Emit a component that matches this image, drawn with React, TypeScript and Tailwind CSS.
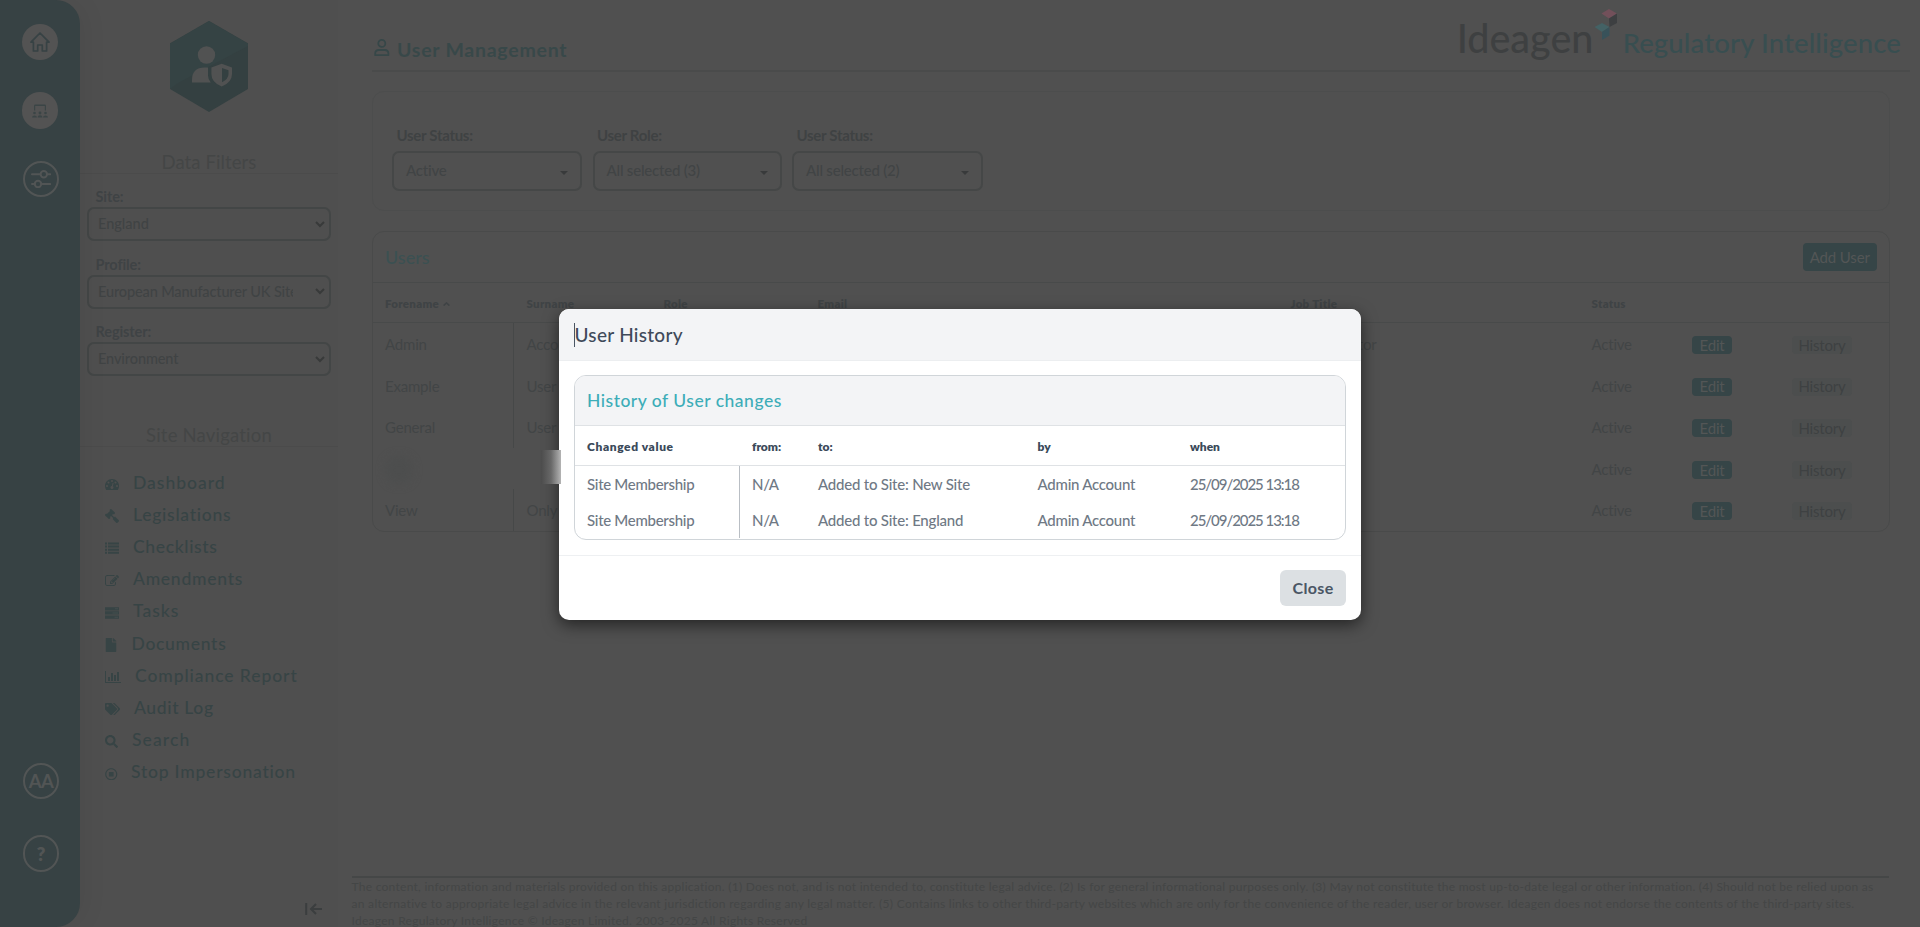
import React from "react";
import { FaFile, FaGavel, FaRegStopCircle, FaSearch, FaTags } from "react-icons/fa";

function Fa4({ d, box = "0 0 1792 1792", className = "w-[14px] h-[14px]" }: { d: string; box?: string; className?: string }) {
  return (
    <svg viewBox={box} className={className} fill="currentColor">
      <path d={d} />
    </svg>
  );
}

const TACHO =
  "M384 1152q0-53-37.5-90.5t-90.5-37.5-90.5 37.5-37.5 90.5 37.5 90.5 90.5 37.5 90.5-37.5 37.5-90.5zm192-448q0-53-37.5-90.5t-90.5-37.5-90.5 37.5-37.5 90.5 37.5 90.5 90.5 37.5 90.5-37.5 37.5-90.5zm428 481l101-382q6-26-7.5-48.5t-38.5-29.5-48 6.5-30 39.5l-101 382q-60 5-107 43.5t-63 98.5q-20 77 20 146t117 89 146-20 89-117q16-60-6-117t-72-91zm660-33q0-53-37.5-90.5t-90.5-37.5-90.5 37.5-37.5 90.5 37.5 90.5 90.5 37.5 90.5-37.5 37.5-90.5zm-640-640q0-53-37.5-90.5t-90.5-37.5-90.5 37.5-37.5 90.5 37.5 90.5 90.5 37.5 90.5-37.5 37.5-90.5zm448 192q0-53-37.5-90.5t-90.5-37.5-90.5 37.5-37.5 90.5 37.5 90.5 90.5 37.5 90.5-37.5 37.5-90.5zm320 448q0 261-141 483-19 29-54 29h-1402q-35 0-54-29-141-221-141-483 0-182 71-348t191-286 286-191 348-71 348 71 286 191 191 286 71 348z";
const PENCIL =
  "M888 1184l116-116-152-152-116 116v56h96v96h56zm440-720q-16-16-33 1l-350 350q-17 17-1 33t33-1l350-350q17-17 1-33zm80 594v190q0 119-84.5 203.5t-203.5 84.5h-832q-119 0-203.5-84.5t-84.5-203.5v-832q0-119 84.5-203.5t203.5-84.5h832q63 0 117 25 15 7 18 23 3 17-9 29l-49 49q-14 14-32 8-23-6-45-6h-832q-66 0-113 47t-47 113v832q0 66 47 113t113 47h832q66 0 113-47t47-113v-126q0-13 9-22l64-64q15-15 35-7t20 29zm-96-738l288 288-672 672h-288v-288zm444 132l-92 92-288-288 92-92q28-28 68-28t68 28l152 152q28 28 28 68t-28 68z";
const CHART =
  "M640 896v512h-256v-512h256zm384-512v1024h-256v-1024h256zm1024 1152v128h-2048v-1536h128v1408h1920zm-640-896v768h-256v-768h256zm384-384v1152h-256v-1152h256z";

const nav: { label: string; icon: React.ReactNode; gap: string; track: string }[] = [
  { label: "Dashboard", gap: "w-[28px]", track: "tracking-[1px]", icon: <Fa4 d={TACHO} /> },
  { label: "Legislations", gap: "w-[28px]", track: "tracking-[0.75px]", icon: <FaGavel className="h-[14px] w-[14px] -scale-x-100" /> },
  {
    label: "Checklists",
    gap: "w-[28px]",
    track: "tracking-[0.65px]",
    icon: (
      <svg viewBox="0 0 14 12" className="h-[12px] w-[14px]" fill="currentColor">
        <path d="M0 .5h2v2H0zM3 .5h11v2H3zM0 3.6h2v2H0zM3 3.6h11v2H3zM0 6.7h2v2H0zM3 6.7h11v2H3zM0 9.8h2v2H0zM3 9.8h11v2H3z" />
      </svg>
    ),
  },
  { label: "Amendments", gap: "w-[28px]", track: "tracking-[0.75px]", icon: <Fa4 d={PENCIL} /> },
  {
    label: "Tasks",
    gap: "w-[28px]",
    track: "tracking-[1px]",
    icon: (
      <svg viewBox="0 0 14 12" className="h-[12px] w-[14px]" fill="currentColor">
        <path d="M0 .2h14v3.3H0zM0 4.3h14v3.3H0zM0 8.5h14v3.3H0z" />
        <path d="M10 1.3h3v1h-3zM7.5 5.5h5.500v1h-5.500zM9.500 9.700h3.500v1h-3.500z" fill="#454e4f" />
      </svg>
    ),
  },
  { label: "Documents", gap: "w-[26.5px]", track: "tracking-[0.7px]", icon: <FaFile className="h-[14px] w-[12px]" /> },
  { label: "Compliance Report", gap: "w-[30px]", track: "tracking-[0.93px]", icon: <Fa4 d={CHART} box="0 0 2048 1792" className="h-[14px] w-[16px]" /> },
  { label: "Audit Log", gap: "w-[29px]", track: "tracking-[0.65px]", icon: <FaTags className="h-[14px] w-[15px]" /> },
  { label: "Search", gap: "w-[27px]", track: "tracking-[1.1px]", icon: <FaSearch className="h-[13px] w-[13px]" /> },
  { label: "Stop Impersonation", gap: "w-[26px]", track: "tracking-[0.79px]", icon: <FaRegStopCircle className="h-[12.5px] w-[12.5px]" /> },
];

function Rail() {
  return (
    <aside className="z-10 flex w-[80px] shrink-0 flex-col rounded-r-[24px] bg-[#374244] pl-[22px] shadow-[6px_0_24px_rgba(0,0,0,0.05)]">
      <div className="mt-[24px] flex h-[36px] w-[36px] items-center justify-center rounded-full bg-[#535353]">
        <svg viewBox="0 0 20 20" className="h-[20px] w-[20px]" fill="none" stroke="#374244" strokeWidth="1.7" strokeLinejoin="round" strokeLinecap="round">
          <path d="M1 10.2L10 1l9 9.200h-2.400v8.800h-4.300v-6h-4.600v6H3.400v-8.800z" />
        </svg>
      </div>
      <div className="mt-[32px] flex h-[37px] w-[36px] items-center justify-center rounded-full bg-[#535353]">
        <svg viewBox="0 0 16 14" className="h-[14px] w-[16px]" fill="#3b4546">
          <path d="M2 6.500V2Q2 .6 3.400.6h9.200Q14 .6 14 2v4.500h-1.200V1.900H3.200V6.500z" />
          <circle cx="2.5" cy="9" r="1.3" />
          <circle cx="8" cy="9" r="1.4" />
          <circle cx="13.5" cy="9" r="1.3" />
          <path d="M0 13.500q0-2 2.500-2t2.500 2zM5.500 13.500q0-2.200 2.500-2.200t2.500 2.200zM11 13.500q0-2 2.500-2t2.500 2z" />
        </svg>
      </div>
      <div className="ml-[1px] mt-[32px] flex h-[36px] w-[36px] items-center justify-center rounded-full border-2 border-[#525555]">
        <svg viewBox="0 0 20 18" className="h-[18px] w-[20px] shrink-0" fill="none" stroke="#525555" strokeWidth="2" strokeLinecap="round">
          <path d="M1 4.200h8M16.500 4.200h2.700M1 14h2.500M11 14h8.200" />
          <circle cx="12.8" cy="4.2" r="3.2" />
          <circle cx="7" cy="14" r="3.2" />
        </svg>
      </div>
      <div className="ml-[1px] mt-[566px] flex h-[36px] w-[36px] items-center justify-center rounded-full border-2 border-[#525555] pt-[1px] text-[18.5px] font-bold tracking-[-0.6px] text-[#525555]">
        AA
      </div>
      <div className="ml-[1px] mt-[36px] flex h-[37px] w-[36px] items-center justify-center rounded-full border-2 border-[#525555] pt-[1px] text-[19px] font-extrabold text-[#525555]">
        ?
      </div>
    </aside>
  );
}

function SideSelect({ label, value, track }: { label: string; value: string; track: string }) {
  return (
    <div className="ml-[7px] h-[67.5px] w-[244px]">
      <div className="pl-[8.5px] text-[14.5px] font-bold leading-[22px] tracking-[-0.1px] text-[#3f4345]">{label}</div>
      <div className="-mt-[1px] flex h-[34px] items-center rounded-[7px] border-2 border-[#434646] pl-[9px] pr-[4px]">
        <div className={`${track} w-[195px] overflow-hidden whitespace-nowrap text-[14.5px] font-medium leading-[20px] text-[#404344]`}>{value}</div>
        <svg viewBox="0 0 10 7" className="ml-auto h-[7px] w-[10px]" fill="none" stroke="#383a3a" strokeWidth="2">
          <path d="M1 1l4 4 4-4" />
        </svg>
      </div>
    </div>
  );
}

function Sidebar() {
  return (
    <div className="flex w-[258px] shrink-0 flex-col bg-[#4f4f4f]">
      <svg viewBox="0 0 78 91" className="ml-[90px] mt-[21px] h-[91px] w-[78px]">
        <path d="M39 0L78 22.500V68L39 91L0 68V22.500z" fill="#344041" />
        <path d="M39 0L78 22.500V25L8 62L0 68V22.500z" fill="#354344" />
        <g fill="#515252">
          <circle cx="36.5" cy="34" r="8.7" />
          <path d="M22 61.500v-2.500q0-12.500 12.500-12.500h3.500v8q0 4 2.800 7z" />
          <path fillRule="evenodd" d="M51.700 42.800l10.300 3.700v6.500q0 8.500-10.300 12.500q-10.300-4-10.300-12.500v-6.500zM52 47v14.300q6.500-3.300 6.500-8.300v-3.700z" />
        </g>
      </svg>
      <div className="mt-[37px] h-[25px] border-b border-[#4b4b4b] text-center text-[18.5px] leading-[26px] tracking-[0.1px] text-[#444646]">Data Filters</div>
      <div className="mt-[12px]">
        <SideSelect label="Site:" value="England" track="tracking-[0px]" />
        <SideSelect label="Profile:" value="European Manufacturer UK Site" track="tracking-[-0.13px]" />
        <SideSelect label="Register:" value="Environment" track="tracking-[-0.1px]" />
      </div>
      <div className="mt-[33.5px] h-[25px] border-b border-[#4b4b4b] text-center text-[18.5px] leading-[26px] tracking-[0.2px] text-[#444646]">Site Navigation</div>
      <nav className="mt-[19.5px] pl-[25px]">
        {nav.map((n) => (
          <div key={n.label} className="flex h-[32.2px] items-center text-[#374445]">
            <div className={`${n.gap} flex shrink-0 items-center pt-[3px]`}>{n.icon}</div>
            <div className={`${n.track} whitespace-nowrap text-[17.5px] font-medium leading-[32px]`}>{n.label}</div>
          </div>
        ))}
      </nav>
      <svg viewBox="0 0 18 12" className="ml-[225px] mt-[115px] h-[12px] w-[18px]" fill="none" stroke="#3b3e3f" strokeWidth="2">
        <path d="M1.200 0v12M17 6H6M11 1L6 6l5 5" />
      </svg>
    </div>
  );
}

function FilterSelect({ label, value, w }: { label: string; value: string; w: string }) {
  return (
    <div className={w}>
      <div className="pl-[4.5px] text-[15px] font-bold leading-[20px] tracking-[-0.3px] text-[#3f4243]">{label}</div>
      <div className="mt-[6px] flex h-[40px] items-center rounded-[7px] border-2 border-[#454747] pl-[12px] pr-[12px] text-[15px] font-medium text-[#414445]">
        <span className="-mt-[1px] tracking-[-0.2px]">{value}</span>
        <svg viewBox="0 0 8 4" className="ml-auto mt-[4px] h-[4px] w-[8px]" fill="#383a3b">
          <path d="M0 0h8L4 4z" />
        </svg>
      </div>
    </div>
  );
}

const users = [
  ["Admin", "Account", "Administrator"],
  ["Example", "User", ""],
  ["General", "User", ""],
  ["", "", ""],
  ["View", "Only", ""],
];

const userCols = "grid grid-cols-[141px_137px_154px_473px_301px_100px_100px_1fr]";

function UsersCard() {
  return (
    <section className="mt-[20px] h-[301px] w-[1518px] rounded-[12px] border border-[#494a4a]">
      <div className="flex h-[51px] items-center justify-between border-b border-[#484a4a] pl-[12px] pr-[12px]">
        <span className="text-[18px] font-medium tracking-[0px] text-[#3b5052]">Users</span>
        <span className="flex h-[28px] w-[74.5px] items-center justify-center rounded-[4px] bg-[#364547] text-[15px] tracking-[-0.15px] text-[#535656]">Add User</span>
      </div>
      <div className={`${userCols} h-[40px] items-center border-b border-[#484a4a] pt-[2px] text-[11.5px] font-extrabold tracking-[0.3px] text-[#3f4345]`}>
        <span className="flex items-center gap-[4px] pl-[12px]">
          Forename
          <svg viewBox="0 0 7 4" className="h-[4px] w-[7px]" fill="none" stroke="currentColor" strokeWidth="1.6">
            <path d="M.6 3.600L3.500 1l2.900 2.600" />
          </svg>
        </span>
        <span className="pl-[12.5px]">Surname</span>
        <span className="pl-[12.5px]">Role</span>
        <span className="pl-[12.5px]">Email</span>
        <span className="pl-[12.5px]">Job Title</span>
        <span className="pl-[12.5px]">Status</span>
      </div>
      {users.map((u, i) => (
        <div key={i} className={`${userCols} h-[41.6px] text-[15px] tracking-[-0.2px] text-[#424546]`}>
          {u[0] ? (
            <span className="border-r border-[#464848] pl-[12px] pt-[11px] leading-[20px]">{u[0]}</span>
          ) : (
            <span className="pl-[12px] pt-[8px]">
              <span className="block h-[28px] w-[28px] rounded-full bg-[#4d4e4e] blur-[4px]" />
            </span>
          )}
          <span className="pl-[12.5px] pt-[11px] leading-[20px]">{u[1]}</span>
          <span />
          <span />
          <span className="pl-[11px] pt-[11px] leading-[20px]">{u[2]}</span>
          <span className="pl-[12.5px] pt-[11px] leading-[20px]">Active</span>
          <span className="pl-[13px] pt-[13px]">
            <span className="flex h-[18px] w-[40px] items-center justify-center rounded-[4px] bg-[#364547] text-[#535656]">Edit</span>
          </span>
          <span className="pl-[13px] pt-[13px]">
            <span className="flex h-[18px] w-[60px] items-center justify-center rounded-[4px] bg-[#4c4e4e] text-[#3e4142]">History</span>
          </span>
        </div>
      ))}
    </section>
  );
}

function Main() {
  return (
    <main className="flex min-w-0 flex-1 flex-col pl-[34px]">
      <header className="mr-[10px] flex h-[72px] shrink-0 border-b-2 border-[#4a4b4b]">
        <svg viewBox="0 0 16 18" className="ml-[2px] mt-[39px] h-[18px] w-[16px]" fill="none" stroke="#364748" strokeWidth="1.8">
          <circle cx="7.8" cy="4.4" r="3.5" />
          <path d="M1.200 16.200v-1.600q0-3.600 3.600-3.600h6q3.600 0 3.600 3.600v1.600z" strokeLinejoin="round" />
        </svg>
        <h1 className="ml-[7px] mt-[36.5px] text-[19.5px] font-bold leading-[26px] tracking-[0.75px] text-[#384849]">User Management</h1>
        <div className="relative ml-auto mr-[9px] flex whitespace-nowrap">
          <span className="mt-[14px] w-[166px] text-[39.5px] font-medium leading-[48px] text-[#3e4041]">Ideagen</span>
          <span className="mt-[24.5px] text-[27.5px] font-medium leading-[36px] tracking-[0.12px] text-[#384e50]">Regulatory Intelligence</span>
          <svg viewBox="0 0 23 31" className="absolute left-[137px] top-[9px] h-[31px] w-[23px]">
            <path d="M15 0l8 4.500-8 5L7.500 4.500z" fill="#72505a" />
            <path d="M15 9.500l8-5v9.500l-7.500 4z" fill="#3d3f41" />
            <path d="M8 14l7.500 4-7.500 5L.5 18z" fill="#446265" />
            <path d="M8 23l7.500-5v8.500l-7.500 4.500z" fill="#38525a" />
          </svg>
        </div>
      </header>
      <section className="mt-[19px] flex h-[120px] w-[1518px] shrink-0 rounded-[12px] border border-[#4c4d4d] pl-[19px] pt-[33px]">
        <FilterSelect label="User Status:" value="Active" w="w-[190px] mr-[10.5px]" />
        <FilterSelect label="User Role:" value="All selected (3)" w="w-[189.5px] mr-[10px]" />
        <FilterSelect label="User Status:" value="All selected (2)" w="w-[191px]" />
      </section>
      <UsersCard />
      <footer className="-ml-[20.5px] mt-auto h-[51px] w-[1537px] shrink-0 whitespace-nowrap border-t-2 border-[#454747] text-[12px] leading-[17.2px] text-[#444646]">
        <p className="tracking-[0.268px]">
          The content, information and materials provided on this application. (1) Does not, and is not intended to, constitute legal advice. (2) Is for general informational purposes only. (3) May not constitute the most up-to-date legal or other information. (4) Should not be relied upon as
        </p>
        <p className="tracking-[0.295px]">
          an alternative to appropriate legal advice in the relevant jurisdiction regarding any legal matter. (5) Contains links to other third-party websites which are only for the convenience of the reader, user or browser. Ideagen does not endorse the contents of the third-party sites.
        </p>
        <p className="tracking-[0.28px]">Ideagen Regulatory Intelligence © Ideagen Limited. 2003-2025 All Rights Reserved</p>
      </footer>
    </main>
  );
}

const historyCols = "grid grid-cols-[165px_66px_219.5px_152.5px_1fr]";
const history = [
  ["Site Membership", "N/A", "Added to Site: New Site", "Admin Account", "25/09/2025 13:18"],
  ["Site Membership", "N/A", "Added to Site: England", "Admin Account", "25/09/2025 13:18"],
];

function HistoryDialog() {
  return (
    <div role="dialog" className="absolute left-[559px] top-[309px] flex h-[311px] w-[802px] flex-col rounded-[10px] bg-white shadow-[0_5px_16px_rgba(0,0,0,0.55)]">
      <div className="flex h-[52px] shrink-0 items-center rounded-t-[10px] border-b border-[#eceef0] bg-[#f3f4f6] pl-[15px]">
        <span className="h-[24px] w-px bg-[#4a5563]" />
        <h2 className="-ml-[0.5px] text-[19px] font-medium leading-[26px] tracking-[0.28px] text-[#3f4a5a]">User History</h2>
      </div>
      <div className="ml-[15px] mt-[14px] h-[165px] w-[772px] shrink-0 overflow-hidden rounded-[12px] border-[1.5px] border-[#d0d5d9]">
        <div className="flex h-[50px] items-center border-b border-[#dfe2e5] bg-[#f3f4f6] pl-[12px] pt-[2px]">
          <h3 className="text-[17.5px] font-medium tracking-[0.5px] text-[#3dadb8]">History of User changes</h3>
        </div>
        <div className={`${historyCols} h-[40px] items-center border-b border-[#dfe2e5] pl-[12px] pt-[2px] text-[12px] font-extrabold text-[#3b4a5a]`}>
          <span className="tracking-[0.6px]">Changed value</span>
          <span>from:</span>
          <span>to:</span>
          <span>by</span>
          <span>when</span>
        </div>
        {history.map((row, i) => (
          <div key={i} className={`${historyCols} h-[36px] items-center pl-[12px] text-[15px] font-medium text-[#6f7985]`}>
            <span className="mr-[12px] flex h-full items-center border-r border-[#b9bec4] tracking-[-0.3px]">{row[0]}</span>
            <span className="tracking-[-0.35px]">{row[1]}</span>
            <span className="tracking-[-0.22px]">{row[2]}</span>
            <span className="tracking-[-0.25px]">{row[3]}</span>
            <span className="tracking-[-1.05px]">{row[4]}</span>
          </div>
        ))}
      </div>
      <div className="mt-[15px] flex flex-1 items-start justify-end border-t border-[#eef0f2] pr-[15px] pt-[14px]">
        <button className="h-[36px] w-[66px] rounded-[6px] bg-[#dce0e3] text-[16px] font-bold tracking-[0.35px] text-[#4a5665]">Close</button>
      </div>
    </div>
  );
}

export default function App() {
  return (
    <div className="relative flex h-[927px] w-full overflow-hidden bg-[#505050] font-['Lato','Open_Sans',sans-serif]">
      <Rail />
      <Sidebar />
      <Main />
      <div className="absolute inset-0 z-20">
        <HistoryDialog />
        <div className="absolute left-[541px] top-[450px] h-[34px] w-[20px] bg-linear-to-r from-[#4c4c4c] via-[#686868] to-[#b4b4b4]" />
      </div>
    </div>
  );
}
